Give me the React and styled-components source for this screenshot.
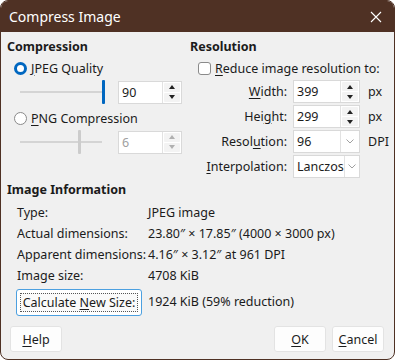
import styled, { createGlobalStyle } from 'styled-components';

const Global = createGlobalStyle`
    body {
        margin: 0;
        background: #ffffff;
        font-family: "Noto Sans", "Open Sans", sans-serif;
        font-size: 12px;
        color: #1b1b1b;
    }
`

const Window = styled.div`
    width: 395px;
    height: 360px;
    box-sizing: border-box;
    background: #f0f0f0;
    border: 1px solid #4f3124;
    border-radius: 8px;
    overflow: hidden;
    display: flex;
    flex-direction: column;
`

const TitleBar = styled.div`
    height: 31px;
    flex: none;
    background: #4f3124;
    color: #ffffff;
    display: flex;
    align-items: center;
    justify-content: space-between;
    padding: 0 12px 0 8px;
    font-size: 14px;
`

const Body = styled.div`
    flex: 1;
    display: flex;
    flex-direction: column;
    padding: 6px 6px 0 6px;
`

const Top = styled.div`
    display: grid;
    grid-template-columns: 183px 1fr;
`

const Column = styled.div`
    display: flex;
    flex-direction: column;
`

const Heading = styled.div`
    font-weight: bold;
    font-size: 12.5px;
    height: 18px;
    line-height: 18px;
    margin-top: ${p => p.$mt || 0}px;
`

const OptionRow = styled.label`
    display: flex;
    align-items: center;
    gap: 4px;
    height: 16px;
    margin: ${p => p.$mt || 0}px 0 0 ${p => p.$ml || 0}px;
    font-size: 12.5px;
    color: #1b1b1b;
`

const Radio = styled.span`
    width: 13px;
    height: 13px;
    box-sizing: border-box;
    border-radius: 50%;
    border: ${p => p.$on ? '3.5px solid #0067c0' : '1px solid #8a8a8a'};
    background: #ffffff;
    flex: none;
`

const Check = styled.span`
    width: 13px;
    height: 13px;
    box-sizing: border-box;
    border-radius: 3px;
    border: 1px solid #8a8a8a;
    background: #ffffff;
    flex: none;
`

const SliderRow = styled.div`
    display: flex;
    align-items: center;
    height: 24px;
    margin-top: ${p => p.$mt || 0}px;
    padding-left: 13px;
    gap: 16px;
`

const Track = styled.div`
    position: relative;
    width: 82px;
    height: 2px;
    background: #d4d4d4;
`

const Thumb = styled.div`
    position: absolute;
    top: -11px;
    left: ${p => p.$at}px;
    width: 3px;
    height: 24px;
    border-radius: 1px;
    background: ${p => p.$off ? '#cccccc' : '#0067c0'};
`

const Field = styled.div`
    display: flex;
    width: ${p => p.$w}px;
    height: 23px;
    box-sizing: border-box;
    background: #ffffff;
    border: 1px solid #d9d9d9;
`

const FieldText = styled.div`
    flex: 1;
    padding-left: 3px;
    line-height: 21px;
    font-size: 12.5px;
    color: ${p => p.$off ? '#a0a0a0' : '#1b1b1b'};
    border-right: 1px solid #e2e2e2;
`

const Spin = styled.div`
    width: 18px;
    display: flex;
    flex-direction: column;
    gap: 1px;
    padding: 1px 1px;
    box-sizing: border-box;
`

const SpinBtn = styled.div`
    flex: 1;
    background: #f3f3f3;
    border-radius: 1px;
    display: flex;
    align-items: center;
    justify-content: center;
    &::after {
        content: '';
        border-left: 3px solid transparent;
        border-right: 3px solid transparent;
        ${p => p.$down ? 'border-top' : 'border-bottom'}: 4px solid ${p => p.$off ? '#b0b0b0' : '#222222'};
    }
`

const Drop = styled.div`
    width: 18px;
    display: flex;
    align-items: center;
    justify-content: center;
`

const FormGrid = styled.div`
    display: grid;
    grid-template-columns: 97px 67px auto;
    column-gap: 6px;
    row-gap: 2px;
    margin-top: 4px;
    align-items: center;
`

const FormLabel = styled.div`
    text-align: right;
    font-size: 12.5px;
`

const Unit = styled.div`
    font-size: 12.5px;
    padding-left: 2px;
`

const InfoGrid = styled.div`
    display: grid;
    grid-template-columns: 131px 1fr;
    grid-template-rows: repeat(4, 21px) 30px;
    align-items: center;
    padding-left: 10px;
    margin-top: 3px;
    font-size: 12.5px;
`

const CalcButton = styled.div`
    width: 126px;
    height: 27px;
    box-sizing: border-box;
    border: 1px solid #4ca0e0;
    border-radius: 3px;
    background: #ffffff;
    padding: 3px;
    margin: 2px 0 0 -1px;
`

const Focus = styled.div`
    height: 100%;
    box-sizing: border-box;
    border: 1px dotted #555555;
    background: #fafafa;
    display: flex;
    align-items: center;
    justify-content: center;
    font-size: 12.5px;
    white-space: pre;
`

const Footer = styled.div`
    display: flex;
    align-items: center;
    margin-top: 10px;
    padding: 0 4px 0 3px;
    gap: 6px;
`

const Button = styled.div`
    width: 52px;
    height: 26px;
    box-sizing: border-box;
    border: 1px solid #e3e3e3;
    border-radius: 3px;
    background: #fdfdfd;
    display: flex;
    align-items: center;
    justify-content: center;
    font-size: 12.5px;
    margin-left: ${p => p.$push ? 'auto' : '0'};
`

const Key = styled.span`
    text-decoration: underline;
    text-underline-offset: 2px;
`

const Close = () => (
    <svg width="12" height="12" viewBox="0 0 12 12">
        <path d="M1 1 L11 11 M11 1 L1 11" stroke="#ffffff" strokeWidth="1.1" />
    </svg>
)

const SpinField = ({ value, w, off }) => (
    <Field $w={w}>
        <FieldText $off={off}>{value}</FieldText>
        <Spin>
            <SpinBtn $off={off} />
            <SpinBtn $down $off={off} />
        </Spin>
    </Field>
)

const DropField = ({ value, w }) => (
    <Field $w={w}>
        <FieldText>{value}</FieldText>
        <Drop>
            <svg width="8" height="5" viewBox="0 0 8 5">
                <path d="M0.5 0.5 L4 4 L7.5 0.5" fill="none" stroke="#a0a0a0" strokeWidth="1" />
            </svg>
        </Drop>
    </Field>
)

const App = () => {
    return (
        <Window>
            <Global />
            <TitleBar>
                <span>Compress Image</span>
                <Close />
            </TitleBar>
            <Body>
                <Top>
                    <Column>
                        <Heading>Compression</Heading>
                        <OptionRow $mt={4} $ml={7}>
                            <Radio $on />
                            <span><Key>J</Key>PEG Quality</span>
                        </OptionRow>
                        <SliderRow $mt={4}>
                            <Track><Thumb $at={82} /></Track>
                            <SpinField value="90" w={64} />
                        </SliderRow>
                        <OptionRow $mt={6} $ml={7}>
                            <Radio />
                            <span><Key>P</Key>NG Compression</span>
                        </OptionRow>
                        <SliderRow $mt={4}>
                            <Track><Thumb $off $at={58} /></Track>
                            <SpinField value="6" w={64} off />
                        </SliderRow>
                    </Column>
                    <Column>
                        <Heading>Resolution</Heading>
                        <OptionRow $mt={4} $ml={8}>
                            <Check />
                            <span><Key>R</Key>educe image resolution to:</span>
                        </OptionRow>
                        <FormGrid>
                            <FormLabel><Key>W</Key>idth:</FormLabel>
                            <SpinField value="399" w={67} />
                            <Unit>px</Unit>
                            <FormLabel>Hei<Key>g</Key>ht:</FormLabel>
                            <SpinField value="299" w={67} />
                            <Unit>px</Unit>
                            <FormLabel>Resol<Key>u</Key>tion:</FormLabel>
                            <DropField value="96" w={67} />
                            <Unit>DPI</Unit>
                            <FormLabel><Key>I</Key>nterpolation:</FormLabel>
                            <DropField value="Lanczos" w={67} />
                            <span />
                        </FormGrid>
                    </Column>
                </Top>
                <Heading $mt={3}>Image Information</Heading>
                <InfoGrid>
                    <span>Type:</span>
                    <span>JPEG image</span>
                    <span>Actual dimensions:</span>
                    <span>23.80″ × 17.85″ (4000 × 3000 px)</span>
                    <span>Apparent dimensions:</span>
                    <span>4.16″ × 3.12″ at 961 DPI</span>
                    <span>Image size:</span>
                    <span>4708 KiB</span>
                    <CalcButton>
                        <Focus><span>Calculate <Key>N</Key>ew Size:</span></Focus>
                    </CalcButton>
                    <span>1924 KiB (59% reduction)</span>
                </InfoGrid>
                <Footer>
                    <Button><Key>H</Key>elp</Button>
                    <Button $push><Key>O</Key>K</Button>
                    <Button><Key>C</Key>ancel</Button>
                </Footer>
            </Body>
        </Window>
    );
}

export default App;
